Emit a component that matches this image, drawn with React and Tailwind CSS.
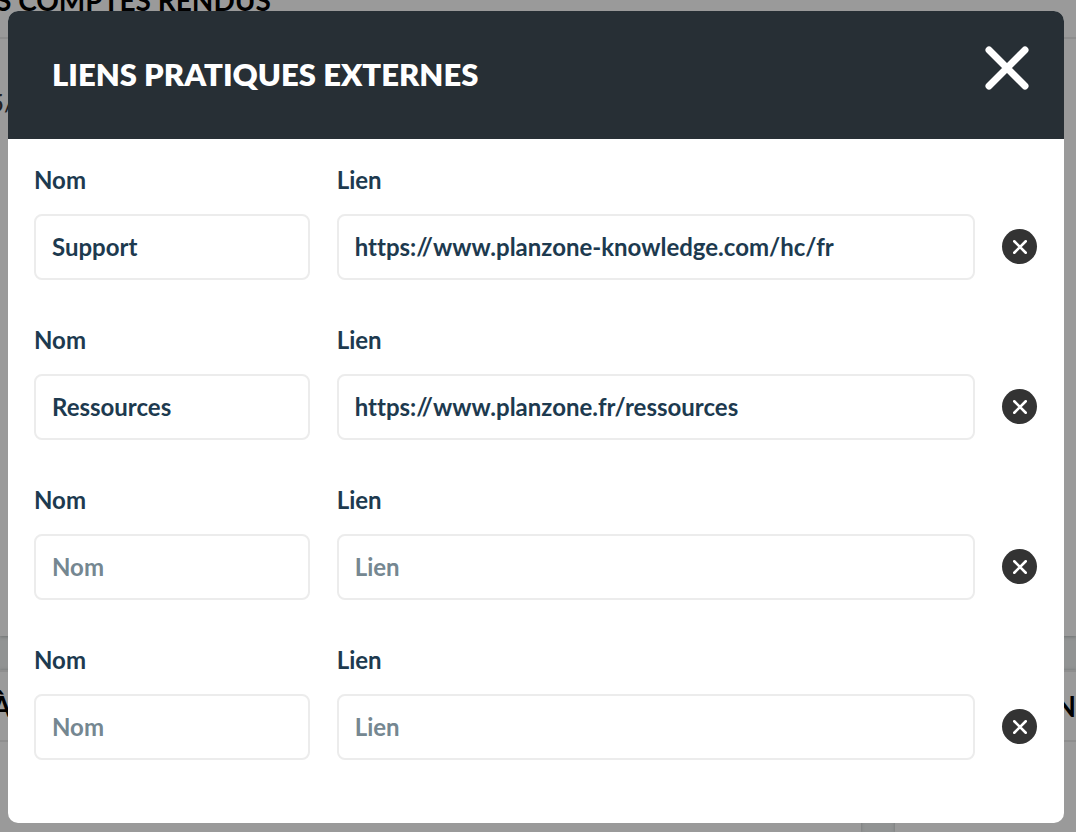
const links = [
  { name: "Support", url: "https://www.planzone-knowledge.com/hc/fr" },
  { name: "Ressources", url: "https://www.planzone.fr/ressources" },
  { name: "", url: "" },
  { name: "", url: "" },
];

function Cross({ className, width }) {
  return (
    <svg viewBox="0 0 44 44" className={className} fill="none" stroke="currentColor" strokeWidth={width} strokeLinecap="round" aria-hidden="true">
      <path d="M4 4 40 40M40 4 4 40" />
    </svg>
  );
}

function Backdrop() {
  return (
    <div aria-hidden="true" className="absolute inset-0 flex flex-col gap-[34px] overflow-hidden bg-[#919393] font-bold text-black">
      <div className="h-[636px] shrink-0 bg-[#9a9a9a] shadow-[0_1px_3px_#6f7373]">
        <div className="flex h-[39px] items-start border-b-2 border-[#8e8e8e]">
          <span className="-mt-4 -ml-1 text-[28px] leading-8 whitespace-nowrap">S COMPTES RENDUS</span>
        </div>
        <p className="mt-12 -ml-2.5 text-2xl font-medium text-[#222]">5/</p>
      </div>
      <div className="flex flex-1 gap-[34px]">
        <div className="flex-1 bg-[#9a9a9a] shadow-[0_0_3px_#6f7373]">
          <div className="flex h-[72px] items-center border-y-2 border-[#8e8e8e]">
            <span className="-ml-2 text-[28px] leading-8">À</span>
          </div>
        </div>
        <div className="w-[181px] bg-[#9a9a9a] shadow-[0_0_3px_#6f7373]">
          <div className="flex h-[72px] items-center justify-end border-y-2 border-[#8e8e8e]">
            <span className="text-[28px] leading-8">N</span>
          </div>
        </div>
      </div>
    </div>
  );
}

const field =
  "block h-[66px] w-full rounded-lg border-2 border-[#ececec] bg-white px-4 pb-0.5 text-2xl font-bold text-[#1d3a4f] outline-none placeholder:text-[#758791] focus:border-[#9aabb5]";

function Field({ id, label, value, type }) {
  return (
    <div>
      <label htmlFor={id} className="block pb-[18px] text-2xl leading-8 font-bold text-[#1d3a4f]">{label}</label>
      <input id={id} type={type} defaultValue={value} placeholder={label} className={field} />
    </div>
  );
}

export default function App() {
  return (
    <div className="relative min-h-screen overflow-hidden pt-[11px] pr-3 pb-[9px] pl-2 font-['Lato',sans-serif] [font-variant-ligatures:none]">
      <Backdrop />
      <section role="dialog" aria-labelledby="dialog-title" className="relative overflow-hidden rounded-[10px] bg-white">
        <header className="flex h-32 items-center justify-between bg-[#272f35] pr-[35px] pl-11 text-white">
          <h1 id="dialog-title" className="pb-0.5 text-[31px] leading-10 font-extrabold">LIENS PRATIQUES EXTERNES</h1>
          <button type="button" aria-label="Fermer" className="mb-[14px]">
            <Cross className="size-11" width="7" />
          </button>
        </header>
        <form className="flex flex-col gap-11 px-[26px] pt-[25px] pb-[63px]">
          {links.map((link, i) => (
            <div key={i} className="grid grid-cols-[276fr_639fr_36px] items-end gap-x-[27px]">
              <Field id={`nom-${i}`} label="Nom" type="text" value={link.name} />
              <Field id={`lien-${i}`} label="Lien" type="url" value={link.url} />
              <button type="button" aria-label="Supprimer" className="mb-4 flex size-[35px] items-center justify-center rounded-full bg-[#333] text-white">
                <Cross className="size-[14px]" width="8" />
              </button>
            </div>
          ))}
        </form>
      </section>
    </div>
  );
}
